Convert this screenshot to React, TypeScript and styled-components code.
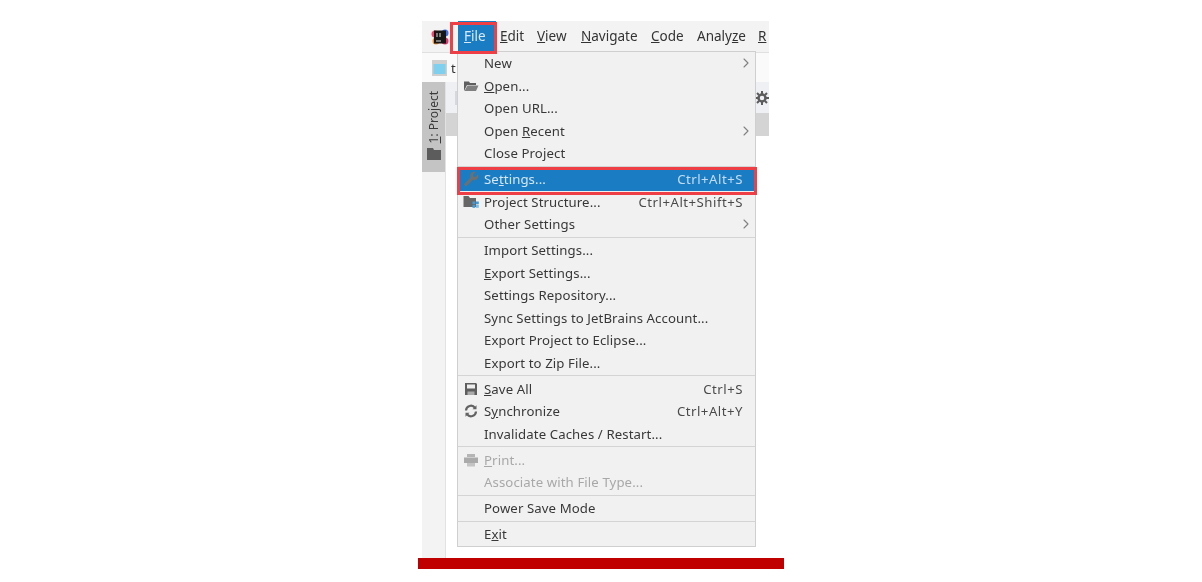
import { Fragment, ReactNode } from 'react';
import styled, { createGlobalStyle } from 'styled-components';
import { ChevronRight } from 'lucide-react';

const GlobalStyle = createGlobalStyle`
  html, body {
    margin: 0;
    padding: 0;
    background: #fff;
  }
`;

const Page = styled.div`
  width: 1202px;
  height: 582px;
  overflow: hidden;
  padding-top: 21px;
  box-sizing: border-box;
  display: flex;
  justify-content: center;
  font-family: 'Noto Sans', 'Open Sans', sans-serif;
`;

const Figure = styled.div`
  width: 366px;
  display: flex;
  flex-direction: column;
  align-items: flex-start;
`;

const Screen = styled.div`
  position: relative;
  width: 347px;
  height: 537px;
  margin-left: 4px;
  background: #fff;
  display: flex;
  flex-direction: column;
  filter: blur(0.6px);
`;

const RedBar = styled.div`
  width: 366px;
  height: 11px;
  background: #c00000;
`;

const MenuBar = styled.div`
  height: 31px;
  flex: none;
  background: #f3f3f3;
  display: flex;
  align-items: center;
  overflow: hidden;
  position: relative;
  font-size: 13.5px;
  color: #333;
`;

const LogoSlot = styled.div`
  width: 36px;
  flex: none;
  display: flex;
  justify-content: center;
`;

const TopItem = styled.div<{ $left: number; $active?: boolean }>`
  position: absolute;
  top: 0;
  left: ${(p) => p.$left}px;
  height: 31px;
  line-height: 31px;
  white-space: nowrap;
  padding: ${(p) => (p.$active ? '0 10px 0 6px' : '0')};
  background: ${(p) => (p.$active ? '#1a7dc4' : 'transparent')};
  color: ${(p) => (p.$active ? '#dbe9f4' : '#333')};
`;

const NavRow = styled.div`
  height: 30px;
  flex: none;
  background: #fafafa;
  border-top: 1px solid #e0e0e0;
  box-sizing: border-box;
  display: flex;
  align-items: center;
  gap: 4px;
  padding-left: 10px;
  font-size: 13px;
  color: #333;
`;

const Body = styled.div`
  flex: 1;
  display: flex;
  min-height: 0;
`;

const SideStrip = styled.div`
  width: 23px;
  flex: none;
  background: #f3f3f3;
  border-right: 1px solid #e2e2e2;
`;

const ProjectTab = styled.div`
  height: 90px;
  background: #c4c4c4;
  color: #3c3c3c;
  font-size: 12px;
  display: flex;
  flex-direction: column;
  align-items: center;
  gap: 5px;
  padding-top: 9px;
  box-sizing: border-box;
`;

const VerticalLabel = styled.span`
  writing-mode: vertical-rl;
  transform: rotate(180deg);
  white-space: nowrap;
`;

const Main = styled.div`
  flex: 1;
  display: flex;
  flex-direction: column;
`;

const ToolRow = styled.div`
  height: 31px;
  background: #eef0f4;
  display: flex;
  align-items: center;
  justify-content: space-between;
  padding-left: 9px;
`;

const ToolStub = styled.span`
  width: 4px;
  height: 14px;
  background: #d5d9df;
`;

const GrayRow = styled.div`
  height: 23px;
  background: #d4d4d4;
`;

const Menu = styled.div`
  position: absolute;
  top: 30px;
  left: 35px;
  width: 299px;
  box-sizing: border-box;
  border: 1px solid #cfcfcf;
  background: #f1f1f1;
  font-size: 13.2px;
  letter-spacing: 0.1px;
  color: #383838;
`;

const Row = styled.div<{ $selected?: boolean; $disabled?: boolean }>`
  position: relative;
  height: 22.5px;
  display: flex;
  align-items: center;
  padding: 0 12px 0 26px;
  white-space: nowrap;
  background: ${(p) => (p.$selected ? '#1a7dc4' : 'transparent')};
  color: ${(p) => (p.$selected ? '#d6e6f3' : p.$disabled ? '#a8a8a8' : '#383838')};
`;

const RowIcon = styled.span`
  position: absolute;
  left: 5px;
  top: 3px;
  width: 16px;
  height: 16px;
  display: flex;
  align-items: center;
  justify-content: center;
`;

const Shortcut = styled.span`
  margin-left: auto;
  letter-spacing: 0.5px;
  opacity: 0.9;
`;

const Arrow = styled(ChevronRight)`
  position: absolute;
  right: 1px;
  top: 3px;
  color: #808080;
`;

const Separator = styled.div`
  height: 3.5px;
  box-sizing: border-box;
  padding-top: 1px;

  &::before {
    content: '';
    display: block;
    height: 1px;
    background: #d4d4d4;
  }
`;

const Highlight = styled.div<{ $top: number; $left: number; $width: number; $height: number }>`
  position: absolute;
  top: ${(p) => p.$top}px;
  left: ${(p) => p.$left}px;
  width: ${(p) => p.$width}px;
  height: ${(p) => p.$height}px;
  box-sizing: border-box;
  border: 3px solid #ef3f46;
`;

const Logo = () => (
  <svg width="18" height="18" viewBox="0 0 18 18">
    <circle cx="4" cy="6" r="3.500" fill="#f0466e" />
    <circle cx="14" cy="5" r="3.500" fill="#3d6fe8" />
    <circle cx="5" cy="13" r="3.500" fill="#f79131" />
    <circle cx="14" cy="13" r="3.500" fill="#e2356f" />
    <rect x="3" y="2.500" width="12" height="13" fill="#161616" />
    <rect x="5" y="12.500" width="5" height="1" fill="#ddd" />
    <rect x="5.500" y="5" width="1" height="4" fill="#ddd" />
    <rect x="8.500" y="5" width="1" height="4" fill="#ddd" />
  </svg>
);

const FolderOpen = () => (
  <svg width="16" height="14" viewBox="0 0 16 14">
    <path d="M1 2.500h5l1 1.500h6v2H4L1 12z" fill="#5f5f5f" />
    <path d="M4.500 6.500H15.500L13 12H1.500z" fill="#808080" />
  </svg>
);

const Wrench = () => (
  <svg width="17" height="17" viewBox="0 0 16 16">
    <path
      d="M15 2.800l-2.800 2.700-1.800-.4-.4-1.800L12.700 .5C10.700 -.1 8.600 .6 7.700 2.200 7 3.500 7.100 5 7.600 6L.8 12.900 3 15.100 9.900 8.300C11 8.800 12.500 8.800 13.600 8.100 15.300 7 15.800 4.800 15 2.800z"
      fill="#6f6f6f"
    />
  </svg>
);

const ProjectFolder = () => (
  <svg width="16" height="14" viewBox="0 0 16 14">
    <path d="M0.500 1h5l1.500 2h6v9H0.500z" fill="#666" />
    <rect x="9.500" y="6.500" width="2.800" height="2.800" fill="#3f9ad6" />
    <rect x="13" y="6.500" width="2.800" height="2.800" fill="#3f9ad6" />
    <rect x="9.500" y="10" width="2.800" height="2.800" fill="#3f9ad6" />
    <rect x="13" y="10" width="2.800" height="2.800" fill="#7dbde6" />
  </svg>
);

const Floppy = () => (
  <svg width="14" height="14" viewBox="0 0 14 14">
    <path d="M1 1h11l1 1v11H1z" fill="#5e5e5e" />
    <rect x="3" y="2.500" width="8" height="4" fill="#eee" />
    <rect x="3.500" y="9.500" width="7" height="3.500" fill="#aaa" />
  </svg>
);

const Sync = () => (
  <svg width="14" height="14" viewBox="0 0 14 14" fill="none" stroke="#636363" strokeWidth="2.200">
    <path d="M2 6.500A5 5 0 0 1 11 3.800" />
    <path d="M12 7.500A5 5 0 0 1 3 10.200" />
    <path d="M12.500 1.200v4h-4z" fill="#636363" stroke="none" />
    <path d="M1.500 12.800v-4h4z" fill="#636363" stroke="none" />
  </svg>
);

const Printer = () => (
  <svg width="16" height="14" viewBox="0 0 16 14">
    <rect x="4" y="1" width="8" height="3" fill="#b5b5b5" />
    <rect x="1" y="4.500" width="14" height="5.500" fill="#aaa" />
    <rect x="4" y="10" width="8" height="3.500" fill="#c4c4c4" />
  </svg>
);

const Gear = () => (
  <svg width="14" height="14" viewBox="0 0 14 14">
    <circle cx="7" cy="7" r="3.500" fill="none" stroke="#5c5c5c" strokeWidth="2.500" />
    <path d="M7 0v3M7 11v3M0 7h3M11 7h3M2 2l2 2M10 10l2 2M12 2l-2 2M4 10l-2 2" stroke="#5c5c5c" strokeWidth="2" />
  </svg>
);

const FileTabIcon = () => (
  <svg width="15" height="16" viewBox="0 0 15 16">
    <rect x="0" y="0" width="15" height="16" fill="#cfcfcf" />
    <rect x="1.500" y="4" width="12" height="10" fill="#7fd0ee" />
  </svg>
);

const SideFolder = () => (
  <svg width="14" height="12" viewBox="0 0 14 12">
    <path d="M0 0h6l1 2h7v10H0z" fill="#5c5c5c" />
  </svg>
);

type Entry = {
  label: ReactNode;
  icon?: ReactNode;
  shortcut?: string;
  submenu?: boolean;
  disabled?: boolean;
  selected?: boolean;
};

const menuGroups: Entry[][] = [
  [
    { label: 'New', submenu: true },
    { label: <><u>O</u>pen...</>, icon: <FolderOpen /> },
    { label: 'Open URL...' },
    { label: <>Open <u>R</u>ecent</>, submenu: true },
    { label: 'Close Project' },
  ],
  [
    { label: <>Se<u>t</u>tings...</>, icon: <Wrench />, shortcut: 'Ctrl+Alt+S', selected: true },
    { label: 'Project Structure...', icon: <ProjectFolder />, shortcut: 'Ctrl+Alt+Shift+S' },
    { label: 'Other Settings', submenu: true },
  ],
  [
    { label: 'Import Settings...' },
    { label: <><u>E</u>xport Settings...</> },
    { label: 'Settings Repository...' },
    { label: 'Sync Settings to JetBrains Account...' },
    { label: 'Export Project to Eclipse...' },
    { label: 'Export to Zip File...' },
  ],
  [
    { label: <><u>S</u>ave All</>, icon: <Floppy />, shortcut: 'Ctrl+S' },
    { label: <>S<u>y</u>nchronize</>, icon: <Sync />, shortcut: 'Ctrl+Alt+Y' },
    { label: 'Invalidate Caches / Restart...' },
  ],
  [
    { label: <><u>P</u>rint...</>, icon: <Printer />, disabled: true },
    { label: 'Associate with File Type...', disabled: true },
  ],
  [{ label: 'Power Save Mode' }],
  [{ label: <>E<u>x</u>it</> }],
];

const topItems: { left: number; label: ReactNode; active?: boolean }[] = [
  { left: 36, label: <><u>F</u>ile</>, active: true },
  { left: 78, label: <><u>E</u>dit</> },
  { left: 115, label: <><u>V</u>iew</> },
  { left: 159, label: <><u>N</u>avigate</> },
  { left: 229, label: <><u>C</u>ode</> },
  { left: 275, label: <>Analy<u>z</u>e</> },
  { left: 336, label: <u>R</u> },
];

const App = () => (
  <Page>
    <GlobalStyle />
    <Figure>
      <Screen>
        <MenuBar>
          <LogoSlot>
            <Logo />
          </LogoSlot>
          {topItems.map((item) => (
            <TopItem key={item.left} $left={item.left} $active={item.active}>
              {item.label}
            </TopItem>
          ))}
        </MenuBar>
        <NavRow>
          <FileTabIcon />
          <span>t</span>
        </NavRow>
        <Body>
          <SideStrip>
            <ProjectTab>
              <VerticalLabel>
                <u>1</u>: Project
              </VerticalLabel>
              <SideFolder />
            </ProjectTab>
          </SideStrip>
          <Main>
            <ToolRow>
              <ToolStub />
              <Gear />
            </ToolRow>
            <GrayRow />
          </Main>
        </Body>
        <Menu>
          {menuGroups.map((group, index) => (
            <Fragment key={index}>
              {index > 0 && <Separator />}
              {group.map((entry, rowIndex) => (
                <Row key={rowIndex} $selected={entry.selected} $disabled={entry.disabled}>
                  {entry.icon && <RowIcon>{entry.icon}</RowIcon>}
                  <span>{entry.label}</span>
                  {entry.shortcut && <Shortcut>{entry.shortcut}</Shortcut>}
                  {entry.submenu && <Arrow size={16} strokeWidth={1.6} />}
                </Row>
              ))}
            </Fragment>
          ))}
        </Menu>
        <Highlight $top={1} $left={28} $width={47} $height={32} />
        <Highlight $top={146} $left={35} $width={300} $height={28} />
      </Screen>
      <RedBar />
    </Figure>
  </Page>
);

export default App;
